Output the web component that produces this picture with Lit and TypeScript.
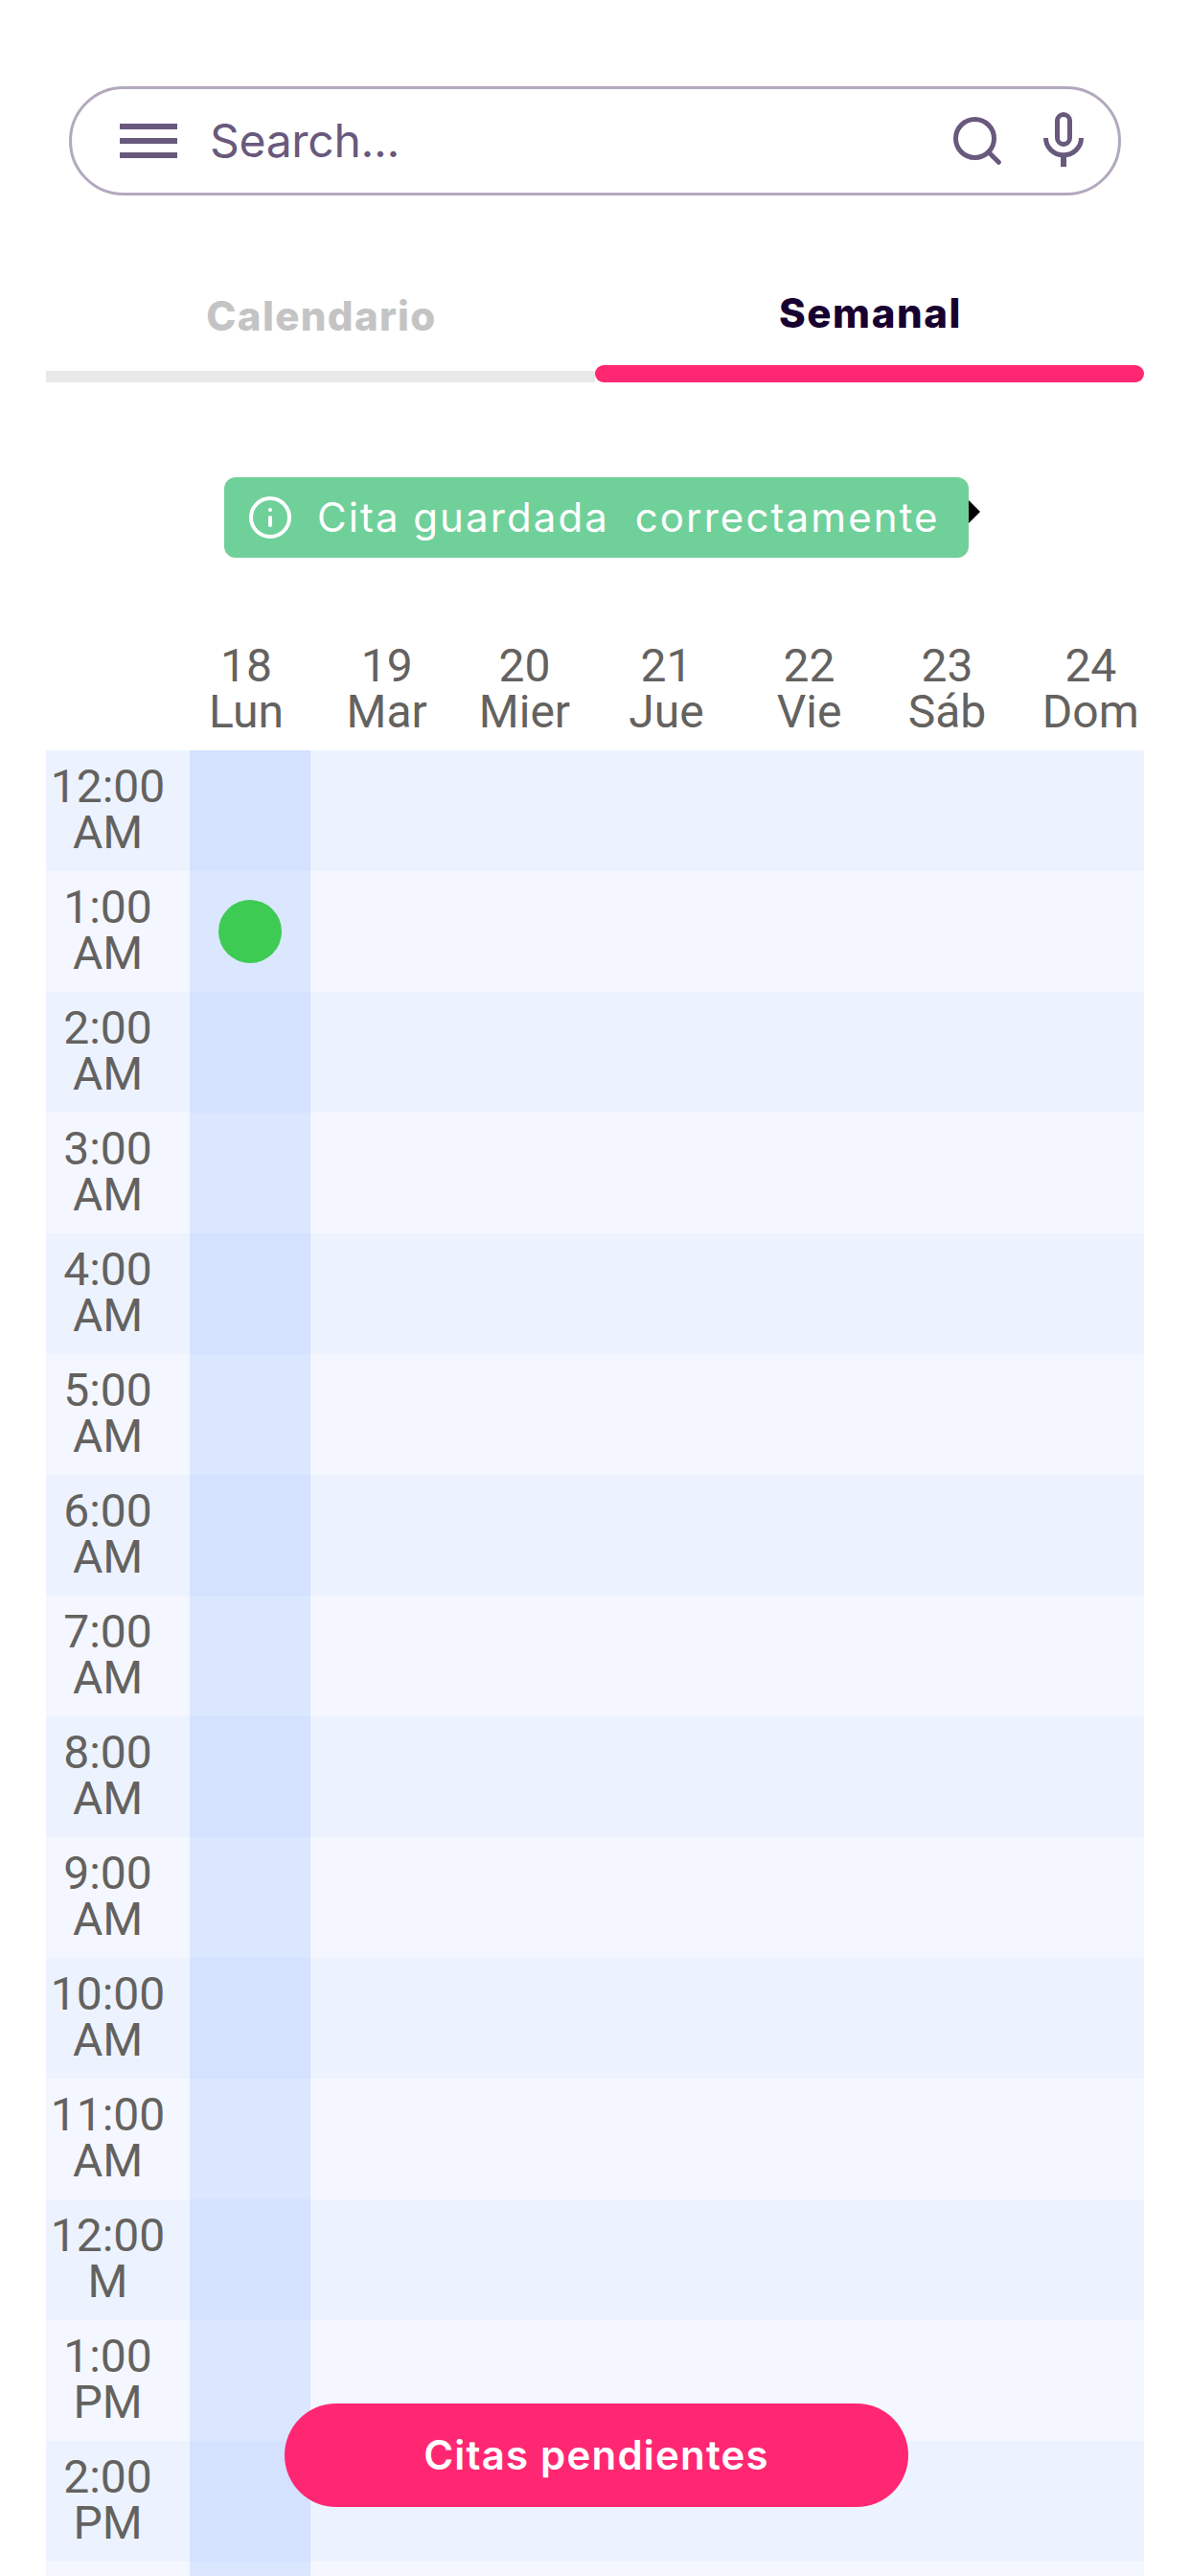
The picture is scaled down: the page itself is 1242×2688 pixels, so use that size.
import { LitElement, html, css } from "lit";
import { customElement, property } from "lit/decorators.js";

const DAYS = [
  { num: "18", name: "Lun" },
  { num: "19", name: "Mar" },
  { num: "20", name: "Mier" },
  { num: "21", name: "Jue" },
  { num: "22", name: "Vie" },
  { num: "23", name: "Sáb" },
  { num: "24", name: "Dom" },
];

const HOURS: [string, string][] = [
  ["12:00", "AM"], ["1:00", "AM"], ["2:00", "AM"], ["3:00", "AM"],
  ["4:00", "AM"], ["5:00", "AM"], ["6:00", "AM"], ["7:00", "AM"],
  ["8:00", "AM"], ["9:00", "AM"], ["10:00", "AM"], ["11:00", "AM"],
  ["12:00", "M"], ["1:00", "PM"], ["2:00", "PM"], ["", ""],
];

@customElement("search-bar")
class SearchBar extends LitElement {
  static styles = css`
    :host { display: block; }
    .bar {
      box-sizing: border-box;
      height: 114px;
      border: 3px solid #b3a9be;
      border-radius: 57px;
      display: flex;
      align-items: center;
      padding: 0 36px 0 50px;
      color: #69597d;
    }
    .menu { width: 60px; height: 36px; display: flex; flex-direction: column; justify-content: space-between; }
    .line { height: 6px; background: #69597d; }
    .hint {
      flex: 1;
      margin-left: 34px;
      font: 400 48px/60px Inter, sans-serif;
      letter-spacing: -0.3px;
    }
    svg { display: block; fill: none; stroke: #69597d; stroke-width: 5; }
    .mic { margin-left: 44px; }
  `;
  render() {
    return html`
      <div class="bar">
        <div class="menu">
          <div class="line"></div><div class="line"></div><div class="line"></div>
        </div>
        <div class="hint">Search...</div>
        <svg width="50" height="60" viewBox="0 0 50 60">
          <circle cx="22.5" cy="27.5" r="20" />
          <path d="M37 42 47.3 52.3" stroke-linecap="round" />
        </svg>
        <svg class="mic" width="42" height="60" viewBox="0 0 42 60">
          <rect x="14.5" y="2.5" width="13" height="31" rx="6.5" />
          <path d="M2.5 27a18.5 17.8 0 0 0 37 0" />
          <path d="M21 45v12" stroke-width="6" />
        </svg>
      </div>
    `;
  }
}

@customElement("week-grid")
class WeekGrid extends LitElement {
  @property({ type: Number }) eventRow = 1;

  static styles = css`
    :host { display: block; font: 400 48px/48px Roboto, sans-serif; color: #646260; }
    .head {
      display: grid;
      grid-template-columns: 146px 147.4px 140.2px 155.8px 142.4px 145.4px 154.4px;
      padding-left: 136px;
      height: 112px;
      text-align: center;
    }
    .row { display: grid; grid-template-columns: 150px 126px 1fr; height: 126px; background: #ecf3ff; }
    .row:nth-child(odd) { background: #f4f7ff; }
    .label { padding: 14px 21px 0 0; text-align: center; }
    .today { background: #d4e1ff; display: flex; align-items: center; justify-content: center; }
    .row:nth-child(odd) .today { background: #dbe6ff; }
    .dot { width: 66px; height: 66px; border-radius: 50%; background: #3dcb54; }
  `;
  render() {
    return html`
      <div class="head">
        ${DAYS.map((d) => html`<div>${d.num}<br />${d.name}</div>`)}
      </div>
      ${HOURS.map(
        ([time, half], i) => html`
          <div class="row">
            <div class="label">${time}<br />${half}</div>
            <div class="today">${i === this.eventRow ? html`<div class="dot"></div>` : null}</div>
          </div>
        `
      )}
    `;
  }
}

@customElement("app-root")
class AppRoot extends LitElement {
  static styles = css`
    :host {
      display: block;
      position: relative;
      box-sizing: border-box;
      width: 1242px;
      height: 2688px;
      overflow: hidden;
      background: #fff;
      padding: 90px 48px 0;
      font-family: Inter, sans-serif;
    }
    .search { margin: 0 24px; }
    .tabs { display: flex; align-items: flex-end; height: 195px; }
    .tab { flex: 1; text-align: center; font-weight: 800; font-size: 42px; line-height: 60px; color: #c4c4c4; }
    .tab .name { padding: 0 0 27px 2px; letter-spacing: 1.35px; }
    .tab .rule { height: 12px; background: #e9e9e9; }
    .tab.active { color: #170030; }
    .tab.active .name { padding-bottom: 24px; letter-spacing: 1.6px; }
    .tab.active .rule { height: 18px; border-radius: 9px; background: #ff2772; }
    .notice { display: flex; align-items: center; margin: 99px 0 0 186px; height: 84px; }
    .toast {
      box-sizing: border-box;
      width: 777px;
      height: 84px;
      border-radius: 12px;
      background: #70d09a;
      color: #fff;
      display: flex;
      align-items: center;
      padding-left: 26px;
    }
    .message {
      white-space: pre;
      margin-left: 27px;
      font-weight: 400;
      font-size: 42px;
      line-height: 60px;
      letter-spacing: 2.1px;
      word-spacing: -0.5px;
    }
    .next { width: 12px; height: 24px; margin-bottom: 12px; }
    svg { display: block; }
    .week { margin-top: 89px; }
    .pending {
      position: absolute;
      left: 297px;
      top: 2508px;
      width: 651px;
      height: 108px;
      border: 0;
      border-radius: 54px;
      padding: 0;
      background: #ff2772;
      color: #fff;
      font: 600 42px/108px Inter, sans-serif;
      letter-spacing: 1.2px;
      text-align: center;
    }
  `;
  render() {
    return html`
      <search-bar class="search"></search-bar>
      <div class="tabs">
        <div class="tab"><div class="name">Calendario</div><div class="rule"></div></div>
        <div class="tab active"><div class="name">Semanal</div><div class="rule"></div></div>
      </div>
      <div class="notice">
        <div class="toast">
          <svg width="44" height="44" viewBox="0 0 44 44" fill="none" stroke="#fff" stroke-width="4">
            <circle cx="22" cy="22" r="20" />
            <path d="M22 22v8" stroke-linecap="round" />
            <circle cx="22" cy="14" r="2.1" fill="#fff" stroke="none" />
          </svg>
          <div class="message">Cita guardada  correctamente</div>
        </div>
        <svg class="next" viewBox="0 0 12 24"><path d="M0 0 12 12 0 24z" fill="#000" /></svg>
      </div>
      <week-grid class="week"></week-grid>
      <button class="pending">Citas pendientes</button>
    `;
  }
}
